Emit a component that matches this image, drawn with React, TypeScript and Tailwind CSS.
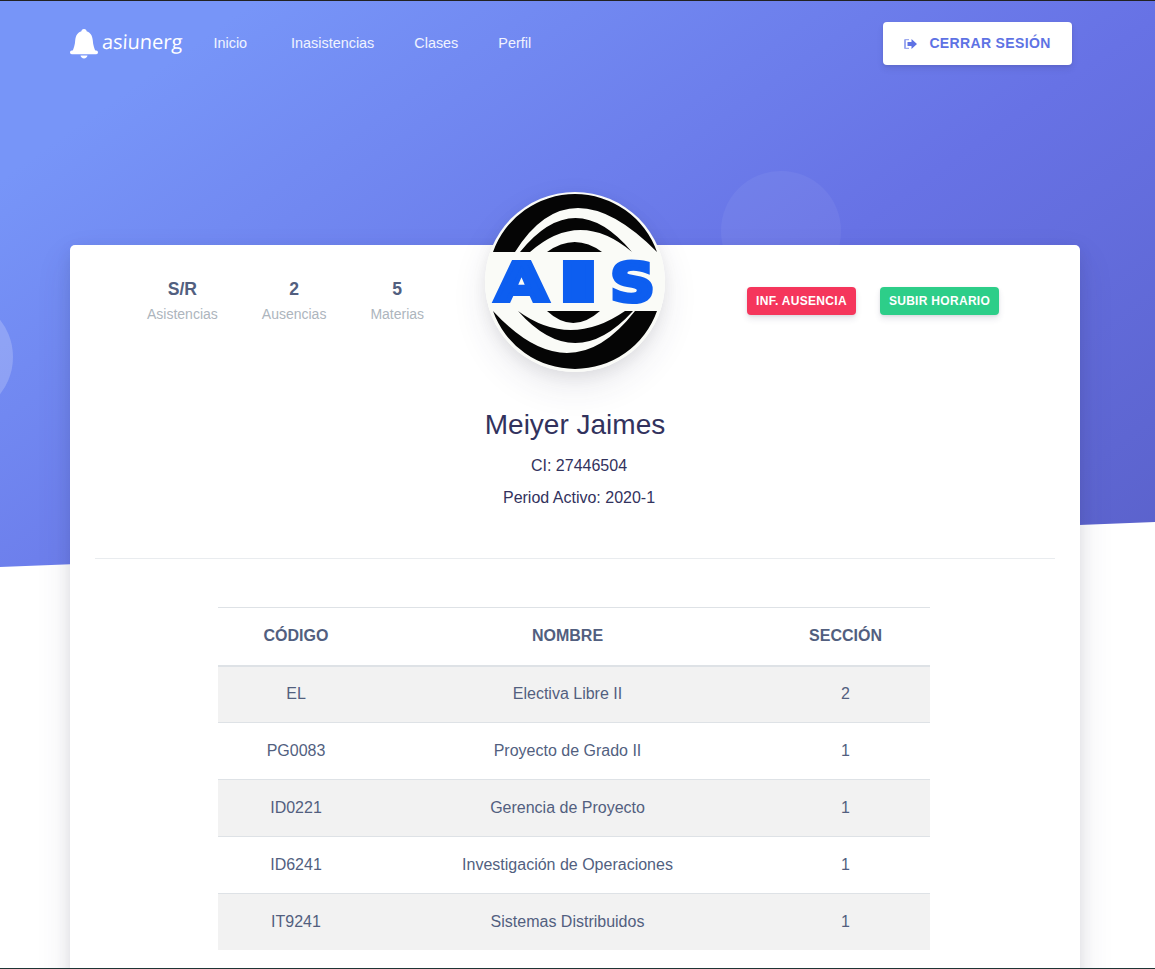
const navLinks = [
  { label: 'Inicio', className: 'ml-[31px]' },
  { label: 'Inasistencias', className: 'ml-[44px]' },
  { label: 'Clases', className: 'ml-[40px]' },
  { label: 'Perfil', className: 'ml-[40px]' },
];

const stats = [
  { value: 'S/R', label: 'Asistencias' },
  { value: '2', label: 'Ausencias' },
  { value: '5', label: 'Materias' },
];

const subjects = [
  { code: 'EL', name: 'Electiva Libre II', section: '2' },
  { code: 'PG0083', name: 'Proyecto de Grado II', section: '1' },
  { code: 'ID0221', name: 'Gerencia de Proyecto', section: '1' },
  { code: 'ID6241', name: 'Investigación de Operaciones', section: '1' },
  { code: 'IT9241', name: 'Sistemas Distribuidos', section: '1' },
];

function BellLogo() {
  return (
    <svg viewBox="0 0 28 30" className="h-[30px] w-[28px]" fill="#fff">
      <circle cx="14" cy="2.600" r="2.600" />
      <path d="M14 2c6.200 0 8.400 4.600 8.800 9.500.3 4.400 1.400 8 3 11.300H2.200c1.600-3.300 2.700-6.900 3-11.300C5.600 6.600 7.800 2 14 2z" />
      <rect x="0" y="21.600" width="28" height="3.600" rx="1.800" />
      <path d="M10.500 26.500h7c-.3 1.800-1.700 2.900-3.500 2.900s-3.200-1.100-3.500-2.900z" />
    </svg>
  );
}

function SignOutIcon() {
  return (
    <svg viewBox="0 0 13 10" className="h-[10px] w-[13px]" fill="#5e72e4">
      <path opacity="0.6" d="M1.300 0H5v1.300H2v7.400h3V10H1.300C.6 10 0 9.400 0 8.700V1.300C0 .6.600 0 1.300 0z" />
      <path d="M7.500 0 13 5l-5.500 5V7H3.500V3h4z" />
    </svg>
  );
}

function AisLogo() {
  return (
    <svg viewBox="0 0 180 180" className="h-full w-full">
      <circle cx="90" cy="90" r="90" fill="#fafbf7" />
      <g fill="#050505">
        <path d="M8 60A87 87 0 0 1 172 60Q85 -28 30 60Z" />
        <path d="M35 60Q90 -8 147 60Q95 16 45 60Z" />
        <path d="M62 60Q90 40 117 60Z" />
        <path d="M62 119Q88 143 115 119Z" />
        <path d="M33 119Q90 183 148 119L140 119Q85 157 33 119Z" />
        <path d="M8 119A87 87 0 0 0 172 119L150 119Q85 203 8 119Z" />
      </g>
      <g
        fontFamily="'DejaVu Sans', sans-serif"
        fontWeight="700"
        fontSize="54"
        fill="#0d5ef0"
        stroke="#0d5ef0"
        strokeWidth="4"
        strokeLinejoin="miter"
        textAnchor="middle"
      >
        <text x="36.500" y="109" textLength="53" lengthAdjust="spacingAndGlyphs">
          A
        </text>
        <text x="93.500" y="109" textLength="44" lengthAdjust="spacingAndGlyphs">
          I
        </text>
        <text x="147.500" y="109" textLength="45" lengthAdjust="spacingAndGlyphs">
          S
        </text>
      </g>
    </svg>
  );
}

export default function App() {
  return (
    <div className="relative h-[969px] w-full overflow-hidden border-t border-b border-t-[#222222] border-b-[#1f3535] bg-white font-['Liberation_Sans',Arial,sans-serif] text-base text-[#525f7f]">
      <div className="absolute inset-x-0 -top-px h-[568px] overflow-hidden bg-[linear-gradient(145deg,#7795f8_13%,#6772e5_60%,#555abf_118%)] [clip-path:polygon(0_0,100%_0,100%_522px,0_567px)]">
        <span className="absolute top-[171px] left-[721px] size-[120px] rounded-full bg-white/[0.05]" />
        <span className="absolute top-[297px] left-[-107px] size-[120px] rounded-full bg-white/20" />
      </div>

      <div className="relative flex flex-col pr-[75px] pl-[70px]">
        <nav className="flex h-[86px] items-center pr-[8px] pb-[1px]">
          <a className="flex items-center gap-[4px]">
            <BellLogo />
            <span className="-mt-[3px] inline-block -skew-x-3 font-['Open_Sans',sans-serif] text-[20px] leading-none font-normal text-white">
              asiunerg
            </span>
          </a>
          {navLinks.map((link) => (
            <a key={link.label} className={`text-[14.4px] text-white/90 ${link.className}`}>
              {link.label}
            </a>
          ))}
          <button className="ml-auto flex h-[43px] w-[189px] items-center justify-center gap-[12px] rounded-[4px] bg-white text-[14px] font-bold tracking-[0.35px] text-[#5e72e4] uppercase shadow-[0_4px_6px_rgba(50,50,93,0.11),0_1px_3px_rgba(0,0,0,0.08)]">
            <SignOutIcon />
            Cerrar sesión
          </button>
        </nav>

        <section className="mt-[158px] flex h-[800px] flex-col rounded-[5px] bg-white px-[25px] shadow-[0_15px_35px_rgba(50,50,93,0.12),0_5px_15px_rgba(0,0,0,0.08)]">
          <div className="relative flex h-[313px] flex-col items-center">
            <div className="absolute top-[-53px] left-1/2 size-[180px] -translate-x-1/2 rounded-full shadow-[0_15px_35px_rgba(50,50,93,0.1),0_5px_15px_rgba(0,0,0,0.07)]">
              <AisLogo />
            </div>

            <div className="flex w-full justify-between">
              <div className="ml-[52px] flex gap-[44px] pt-[32px]">
                {stats.map((stat) => (
                  <div key={stat.label} className="flex flex-col items-center">
                    <span className="-mt-[1px] text-[17.6px] leading-[26px] font-bold text-[#525f7f]">{stat.value}</span>
                    <span className="mt-[2px] text-[14px] leading-[21px] text-[#adb5bd]">{stat.label}</span>
                  </div>
                ))}
              </div>
              <div className="mr-[56px] flex gap-[24px] pt-[42px]">
                <button className="h-[28px] w-[109px] rounded-[4px] bg-[#f5365c] text-[12px] font-bold tracking-[0.3px] text-white uppercase shadow-[0_4px_6px_rgba(50,50,93,0.11),0_1px_3px_rgba(0,0,0,0.08)]">
                  Inf. ausencia
                </button>
                <button className="h-[28px] w-[119px] rounded-[4px] bg-[#2dce89] text-[12px] font-bold tracking-[0.3px] text-white uppercase shadow-[0_4px_6px_rgba(50,50,93,0.11),0_1px_3px_rgba(0,0,0,0.08)]">
                  Subir horario
                </button>
              </div>
            </div>

            <h3 className="mt-[83px] text-[28px] leading-[34px] font-normal text-[#32325d]">Meiyer Jaimes</h3>
            <p className="mt-[12px] pl-[8px] text-[16px] leading-[24px] text-[#32325d]">CI: 27446504</p>
            <p className="mt-[8px] pl-[8px] text-[16px] leading-[24px] text-[#32325d]">Period Activo: 2020-1</p>
          </div>

          <hr className="border-t border-[#e9ecef]" />

          <table className="mt-[48px] ml-[123px] w-[712px] border-collapse text-center">
            <thead>
              <tr className="h-[58px] border-t border-b-2 border-t-[#dee2e6] border-b-[#dee2e6]">
                <th className="w-[156px] font-bold uppercase">Código</th>
                <th className="w-[387px] font-bold uppercase">Nombre</th>
                <th className="w-[169px] font-bold uppercase">Sección</th>
              </tr>
            </thead>
            <tbody>
              {subjects.map((row, i) => (
                <tr
                  key={row.code}
                  className={`h-[57px] border-t border-[#dee2e6] first:border-t-0 last:h-[56px] ${i % 2 === 0 ? 'bg-[#f2f2f2]' : ''}`}
                >
                  <td>{row.code}</td>
                  <td>{row.name}</td>
                  <td>{row.section}</td>
                </tr>
              ))}
            </tbody>
          </table>
        </section>
      </div>
    </div>
  );
}
